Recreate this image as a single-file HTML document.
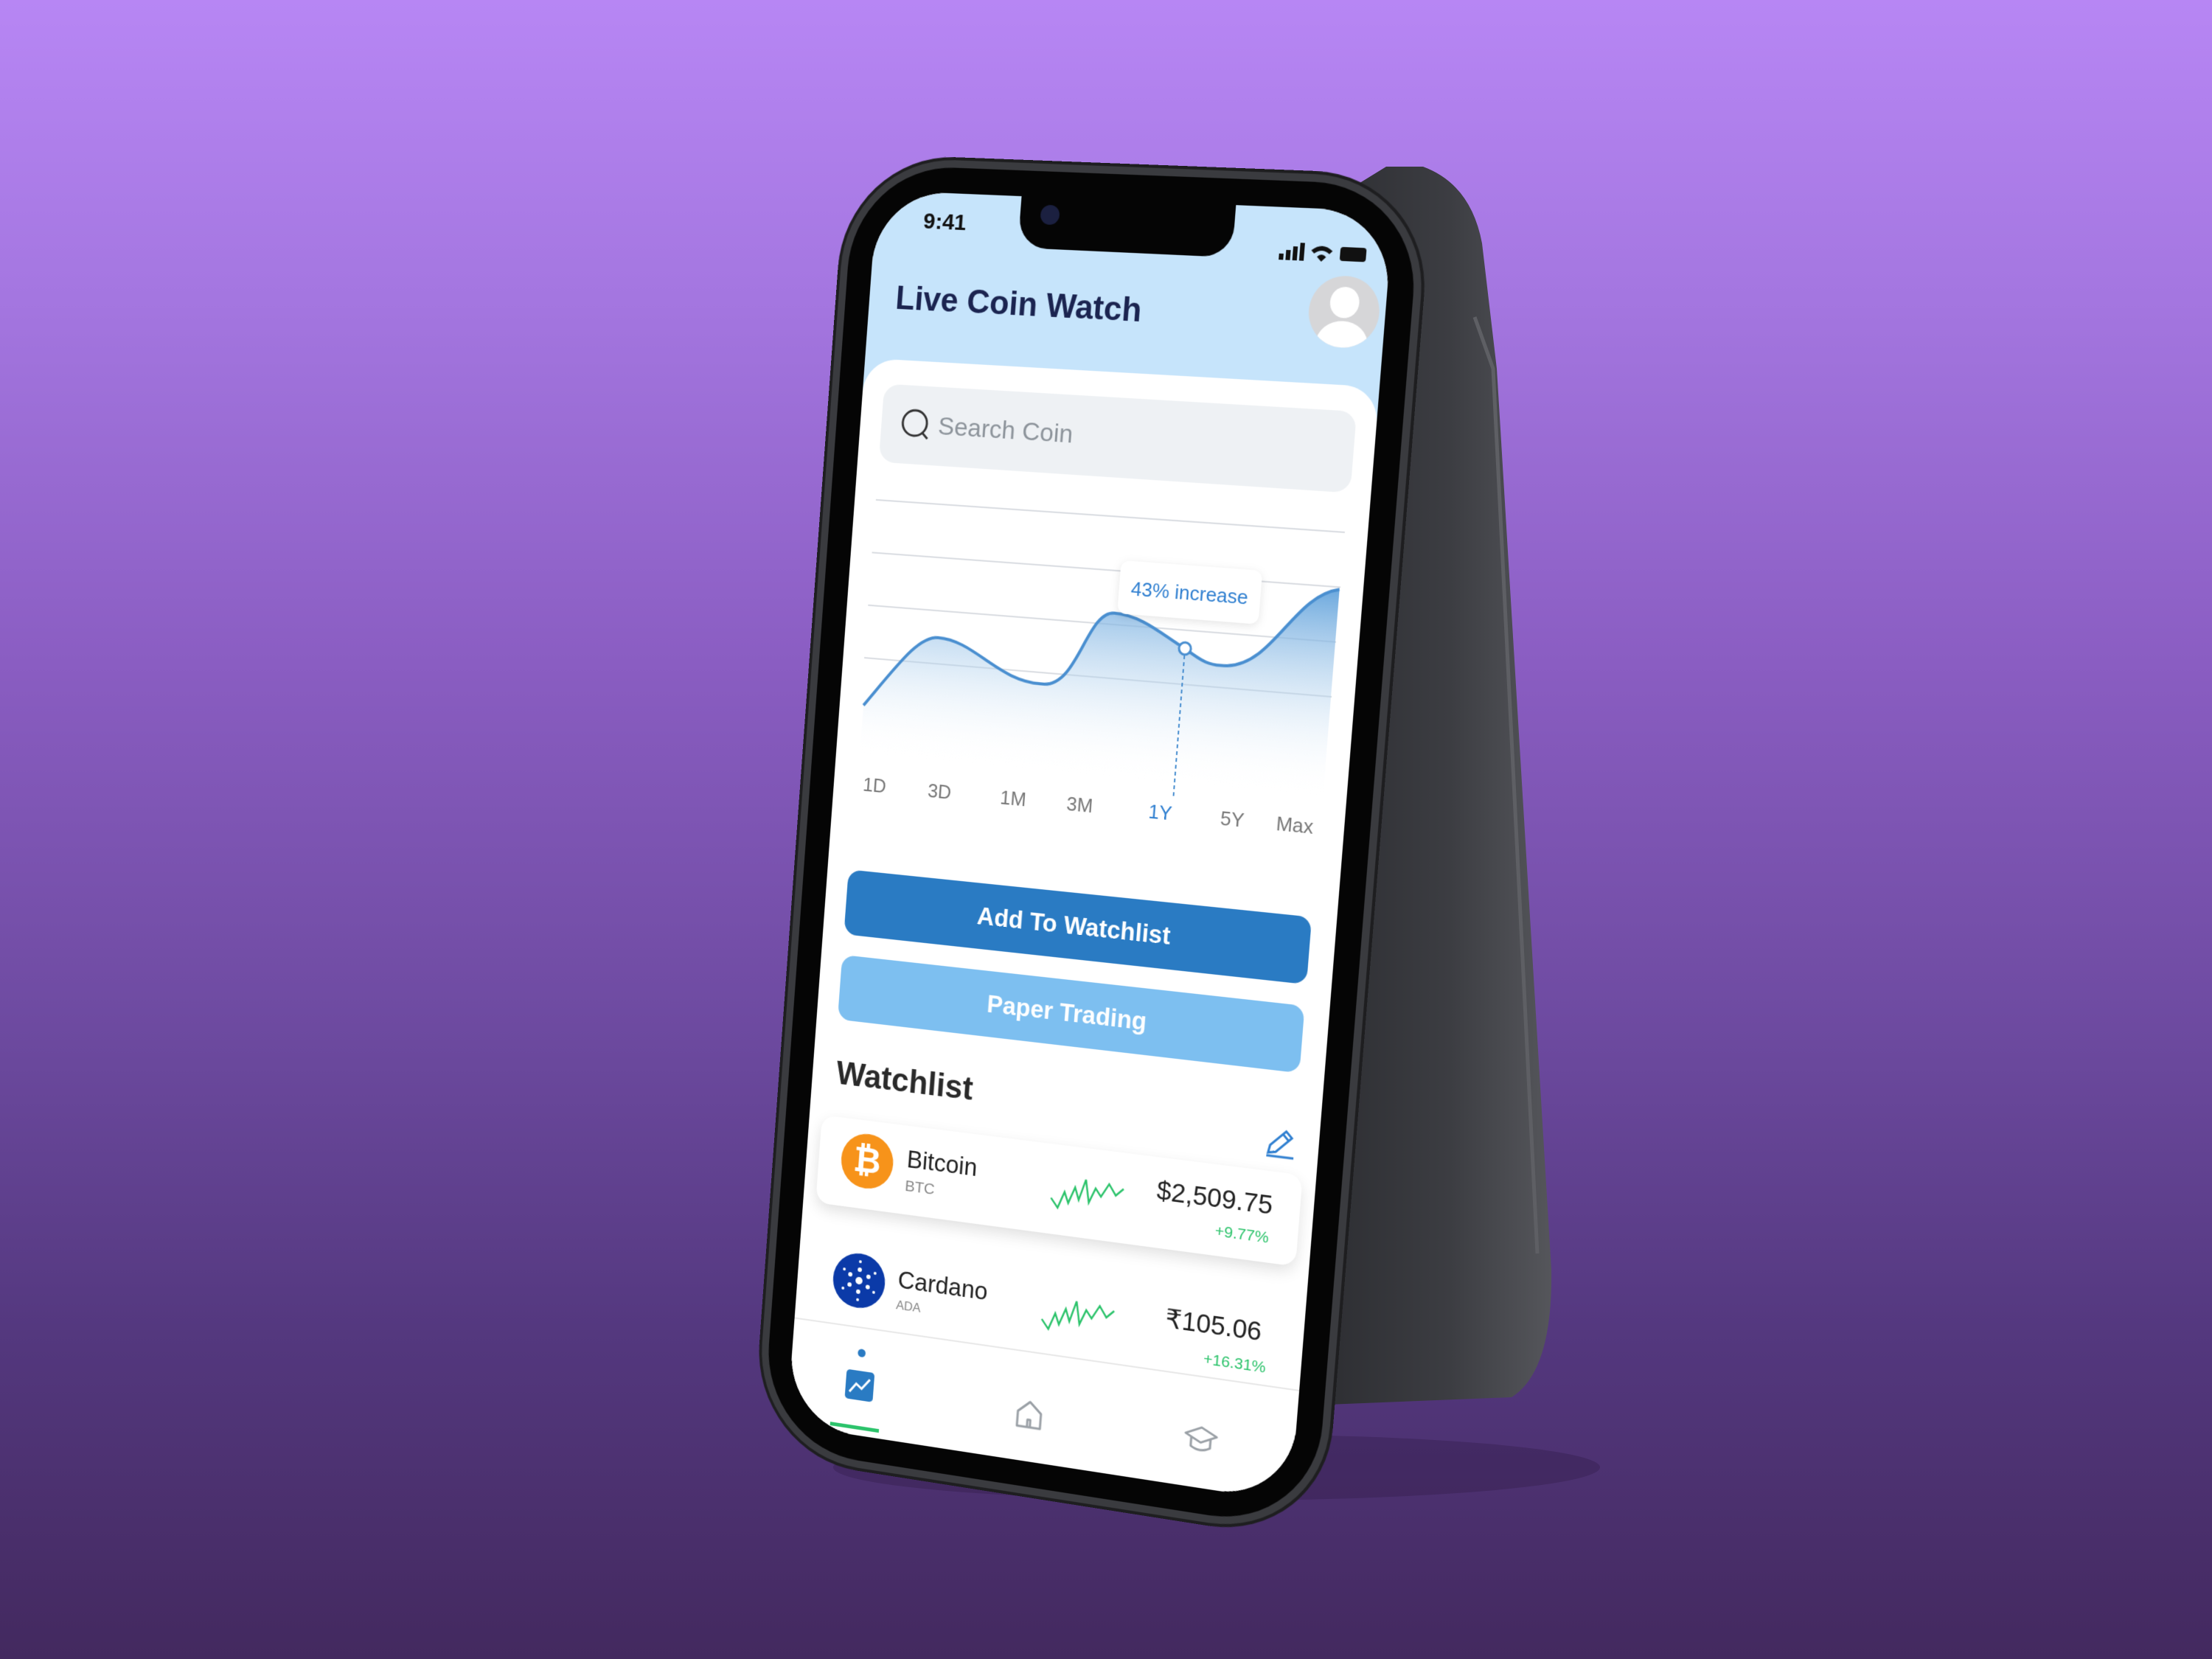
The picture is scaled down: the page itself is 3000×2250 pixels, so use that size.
<!DOCTYPE html>
<html><head><meta charset="utf-8"><style>
html,body{margin:0;padding:0}
body{width:3000px;height:2250px;overflow:hidden;position:relative;font-family:"Liberation Sans",sans-serif;
background:linear-gradient(180deg,#b786f4 0%,#a476e0 18%,#8a5dc2 40%,#6d4aa0 62%,#54387f 80%,#43295f 100%);}
.wrap{position:absolute;left:0;top:0;width:700px;height:1678px;transform-origin:0 0;
transform:matrix3d(0.88017,0.023229,0,-0.0000634,-0.06326,1.015799,0,0.000009412,0,0,1,0,1190,258,0,1);}
.frame{position:absolute;left:-44px;top:-44px;width:788px;height:1766px;border-radius:150px;background:#3a3b3f;box-shadow:0 0 0 4px #1e1e20;}
.bezel{position:absolute;left:-34px;top:-34px;width:768px;height:1746px;border-radius:140px;background:#050505;}
.screen{position:absolute;left:0;top:0;width:700px;height:1678px;border-radius:100px;overflow:hidden;background:#fff;}
.hdr{position:absolute;left:0;top:0;width:700px;height:300px;background:#c6e4fb;}
.card{position:absolute;left:0;top:225px;width:700px;height:1500px;background:#fff;border-radius:46px 46px 0 0;}
.notch{position:absolute;left:202px;top:-10px;width:291px;height:78px;background:#050505;border-radius:0 0 40px 40px;}
.t{position:absolute;white-space:nowrap;}
</style></head><body>
<svg style="position:absolute;left:0;top:0" width="3000" height="2250">
<defs><linearGradient id="bk" x1="0" x2="1" y1="0" y2="0"><stop offset="0" stop-color="#2a2b2f"/><stop offset=".6" stop-color="#3c3d42"/><stop offset="1" stop-color="#55565b"/></linearGradient></defs>
<ellipse cx="1650" cy="1990" rx="520" ry="45" fill="#2a1840" opacity=".3"/>
<path d="M1880,226 L1930,226 Q1995,250 2010,330 L2030,500 L2104,1722 Q2106,1860 2050,1895 L1800,1905 L1760,1900 L1760,300 Z" fill="url(#bk)"/>
<path d="M2000,430 L2025,500 L2085,1700" stroke="#5e5f64" stroke-width="5" fill="none"/>
</svg>
<div class="wrap">
<div class="frame"></div><div class="bezel"></div>
<div class="screen">
<div class="hdr"></div>
<div class="notch"><div style="position:absolute;left:28px;top:20px;width:26px;height:26px;border-radius:50%;background:#1b2040"></div></div>
<div class="t" style="left:68px;top:22px;font-size:30px;font-weight:bold;color:#111">9:41</div>
<svg style="position:absolute;left:555px;top:40px" width="120" height="34"><g fill="#111"><rect x="0" y="20" width="6" height="8"/><rect x="9" y="15" width="6" height="13"/><rect x="18" y="10" width="6" height="18"/><rect x="27" y="5" width="6" height="23"/><path d="M42,14 Q56,2 70,14 L66,18 Q56,10 46,18 Z M50,22 Q56,16 62,22 L56,28 Z"/><rect x="80" y="8" width="34" height="18" rx="4"/></g></svg>
<div class="t" style="left:37px;top:118px;font-size:44px;font-weight:bold;color:#1b2450">Live Coin Watch</div>
<div style="position:absolute;left:600px;top:85px;width:92px;height:92px;border-radius:50%;background:#d6d6d8;overflow:hidden">
<div style="position:absolute;left:27px;top:14px;width:38px;height:40px;border-radius:50%;background:#fff"></div>
<div style="position:absolute;left:12px;top:58px;width:68px;height:60px;border-radius:50%;background:#fff"></div></div>
<div class="card"></div>
<div style="position:absolute;left:30px;top:258px;width:643px;height:105px;border-radius:22px;background:#eef1f4"></div>
<svg style="position:absolute;left:55px;top:286px" width="50" height="50"><circle cx="22" cy="22" r="17" stroke="#333" stroke-width="3" fill="none"/><path d="M34,35 L41,42" stroke="#333" stroke-width="3"/></svg>
<div class="t" style="left:110px;top:291px;font-size:34px;color:#8d949b">Search Coin</div>
<svg style="position:absolute;left:0;top:0" width="700" height="900">
<defs><linearGradient id="cg" x1="0" x2="0" y1="0" y2="1"><stop offset="0" stop-color="#5c9fda" stop-opacity=".9"/><stop offset="1" stop-color="#fff" stop-opacity="0"/></linearGradient></defs>
<g stroke="#dadde2" stroke-width="2"><line x1="30" y1="414" x2="670" y2="414"/><line x1="30" y1="485" x2="670" y2="485"/><line x1="30" y1="556" x2="670" y2="556"/><line x1="30" y1="627" x2="670" y2="627"/></g>
<path d="M34,691 C80,630 105,592 132,592 C185,592 220,645 284,642 C330,640 335,541 372,541 C410,541 440,565 471,580 C495,595 505,600 529,598 C590,592 610,500 669,488 L669,760 L34,760 Z" fill="url(#cg)"/>
<path d="M34,691 C80,630 105,592 132,592 C185,592 220,645 284,642 C330,640 335,541 372,541 C410,541 440,565 471,580 C495,595 505,600 529,598 C590,592 610,500 669,488" fill="none" stroke="#4a8fd0" stroke-width="4"/>
<line x1="471" y1="580" x2="471" y2="775" stroke="#4a8fd0" stroke-width="2" stroke-dasharray="5,4"/>
<circle cx="471" cy="580" r="8" fill="#fff" stroke="#4a8fd0" stroke-width="3"/>
<rect x="376" y="471" width="190" height="70" rx="12" fill="#fff" style="filter:drop-shadow(0 3px 6px rgba(0,0,0,.1))"/>
<text x="471" y="516" font-size="26" fill="#2f7fd0" text-anchor="middle" font-family="Liberation Sans">43% increase</text>
<g font-size="26" fill="#777" font-family="Liberation Sans" text-anchor="middle">
<text x="58" y="806">1D</text><text x="150" y="806">3D</text><text x="253" y="806">1M</text><text x="345" y="806">3M</text><text x="455" y="806" fill="#2f7fd0">1Y</text><text x="552" y="806">5Y</text><text x="635" y="806">Max</text></g>
</svg>
<div style="position:absolute;left:30px;top:914px;width:637px;height:88px;border-radius:18px;background:#2a7bc3;color:#fff;font-size:33px;font-weight:bold;text-align:center;line-height:88px">Add To Watchlist</div>
<div style="position:absolute;left:30px;top:1030px;width:637px;height:88px;border-radius:18px;background:#7dbff0;color:#fff;font-size:33px;font-weight:bold;text-align:center;line-height:88px">Paper Trading</div>
<div class="t" style="left:34px;top:1166px;font-size:44px;font-weight:bold;color:#2a2a2a">Watchlist</div>
<div style="position:absolute;left:18px;top:1250px;width:664px;height:120px;border-radius:20px;background:#fff;box-shadow:0 8px 20px rgba(0,0,0,.12)"></div>
<svg style="position:absolute;left:628px;top:1190px" width="44" height="44"><path d="M6,36 L8,26 L28,6 L36,14 L16,34 Z M24,10 L32,18 M4,40 L40,40" stroke="#2f7fd0" stroke-width="3" fill="none"/></svg>
<div style="position:absolute;left:50px;top:1268px;width:74px;height:74px;border-radius:50%;background:#f7931a;color:#fff;font-size:48px;font-weight:bold;text-align:center;line-height:74px">₿</div>
<div class="t" style="left:143px;top:1276px;font-size:33px;color:#222">Bitcoin</div>
<div class="t" style="left:143px;top:1320px;font-size:21px;color:#888">BTC</div>
<svg style="position:absolute;left:345px;top:1282px" width="110" height="60"><path d="M2,40 L12,52 L20,30 L26,44 L34,22 L40,38 L48,10 L54,40 L62,20 L70,30 L80,12 L90,26 L100,16" stroke="#2cc36b" stroke-width="2.5" fill="none"/></svg>
<div class="t" style="left:490px;top:1275px;font-size:35px;color:#222">$2,509.75</div>
<div class="t" style="left:572px;top:1326px;font-size:21px;color:#2cc36b">+9.77%</div>
<div style="position:absolute;left:51px;top:1431px;width:74px;height:74px;border-radius:50%;background:#0b3aa8"></div>
<svg style="position:absolute;left:51px;top:1431px" width="74" height="74"><g fill="#fff"><circle cx="37" cy="37" r="5"/><circle cx="37" cy="22" r="3"/><circle cx="37" cy="52" r="3"/><circle cx="24" cy="30" r="3"/><circle cx="50" cy="30" r="3"/><circle cx="24" cy="44" r="3"/><circle cx="50" cy="44" r="3"/><circle cx="37" cy="11" r="2"/><circle cx="37" cy="63" r="2"/><circle cx="15" cy="24" r="2"/><circle cx="59" cy="24" r="2"/><circle cx="15" cy="50" r="2"/><circle cx="59" cy="50" r="2"/></g></svg>
<div class="t" style="left:143px;top:1440px;font-size:33px;color:#222">Cardano</div>
<div class="t" style="left:143px;top:1484px;font-size:17px;color:#888">ADA</div>
<svg style="position:absolute;left:345px;top:1445px" width="110" height="60"><path d="M2,40 L12,52 L20,30 L26,44 L34,22 L40,38 L48,10 L54,40 L62,20 L70,30 L80,12 L90,26 L100,16" stroke="#2cc36b" stroke-width="2.5" fill="none"/></svg>
<div class="t" style="left:515px;top:1442px;font-size:35px;color:#222">₹105.06</div>
<div class="t" style="left:570px;top:1496px;font-size:21px;color:#2cc36b">+16.31%</div>
<div style="position:absolute;left:0;top:1530px;width:700px;height:150px;background:rgba(255,255,255,.88);border-top:2px solid #e8e8e8"></div>
<div style="position:absolute;left:94px;top:1560px;width:11px;height:11px;border-radius:50%;background:#2a7bc3"></div>
<svg style="position:absolute;left:78px;top:1588px" width="44" height="44"><rect x="2" y="2" width="40" height="40" rx="5" fill="#2a7bc3"/><path d="M8,32 L17,20 L25,26 L36,12" stroke="#fff" stroke-width="3" fill="none"/></svg>
<div style="position:absolute;left:62px;top:1665px;width:70px;height:5px;background:#2cc36b"></div>
<svg style="position:absolute;left:318px;top:1592px" width="44" height="44"><path d="M6,20 L22,6 L38,20 L38,40 L6,40 Z M20,40 L20,30 L24,30 L24,40" stroke="#9aa0a6" stroke-width="3" fill="none" stroke-linejoin="round"/></svg>
<svg style="position:absolute;left:550px;top:1592px" width="50" height="44"><path d="M4,16 L25,6 L46,16 L25,26 Z M12,20 L12,32 Q25,40 38,32 L38,20" stroke="#9aa0a6" stroke-width="3" fill="none" stroke-linejoin="round"/></svg>
</div>
</div>
</body></html>
